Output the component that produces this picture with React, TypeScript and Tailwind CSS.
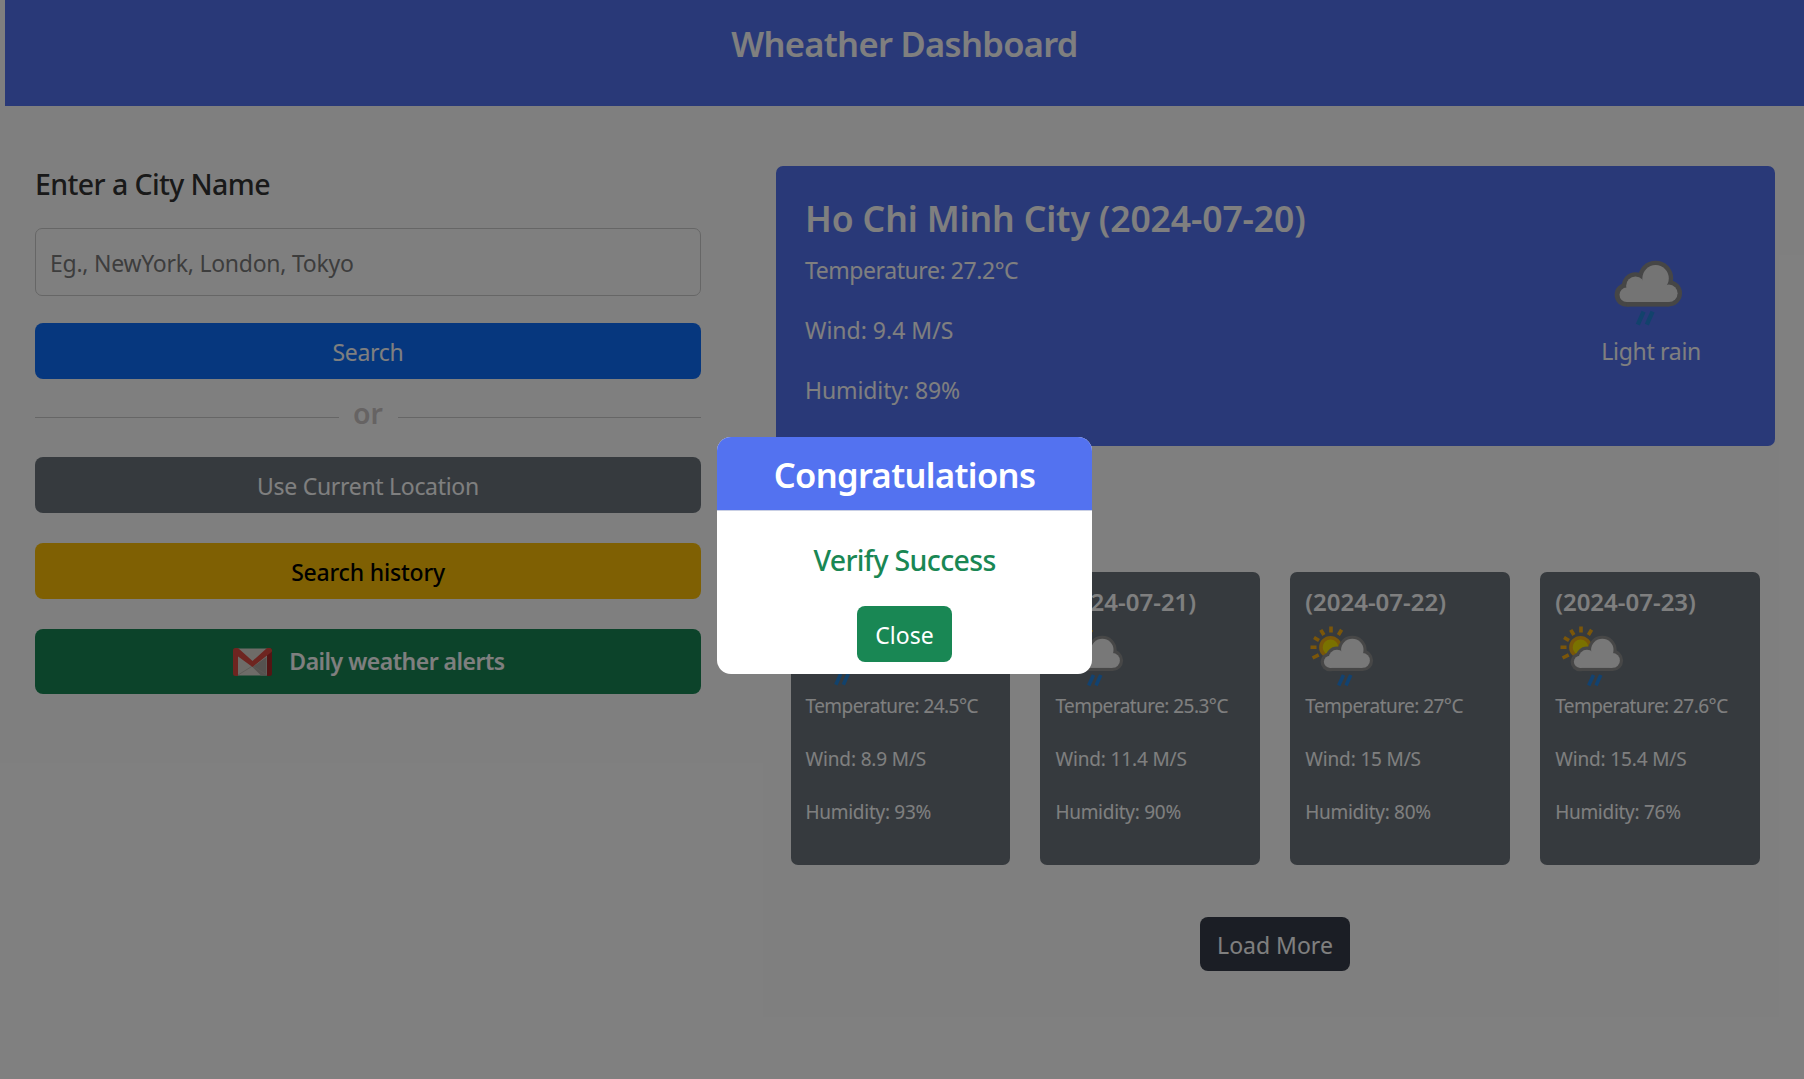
type Forecast = { date: string; temp: string; wind: string; humidity: string; sunny: boolean };

const forecasts: Forecast[] = [
  { date: "2024-07-20", temp: "24.5", wind: "8.9", humidity: "93", sunny: false },
  { date: "2024-07-21", temp: "25.3", wind: "11.4", humidity: "90", sunny: true },
  { date: "2024-07-22", temp: "27", wind: "15", humidity: "80", sunny: true },
  { date: "2024-07-23", temp: "27.6", wind: "15.4", humidity: "76", sunny: true },
];

function RainCloud({ className }: { className: string }) {
  return (
    <svg viewBox="0 0 96 96" className={className} aria-hidden="true">
      <g fill="#8c8c8c">
        <circle cx="53.6" cy="42.3" r="17.6" />
        <circle cx="33.5" cy="50" r="13.7" />
        <circle cx="24.4" cy="58.8" r="11.8" />
        <circle cx="66.9" cy="57.3" r="13.1" />
        <rect x="24.4" y="52" width="42.3" height="18.6" />
      </g>
      <g fill="#e8e8e8">
        <circle cx="53.6" cy="42.3" r="13.2" />
        <circle cx="33.5" cy="50" r="9.4" />
        <circle cx="24.7" cy="58.8" r="7.2" />
        <circle cx="66.9" cy="57.3" r="8.7" />
        <rect x="24.7" y="52" width="42" height="14" />
        <rect x="36" y="46.5" width="16" height="8" />
      </g>
      <path d="M41.6 75.7 35.8 88.6M50.6 75.7 44.8 88.6" stroke="#2484d8" strokeWidth="4.4" />
    </svg>
  );
}

function SunRainCloud({ className }: { className: string }) {
  return (
    <svg viewBox="0 0 80 80" className={className} aria-hidden="true">
      <path
        d="M26 15.5V21.5M15.8 18.8 18.9 24M9 26.5 14 29.5M5.5 36.3H11.5M7.6 47 13.7 43.9M36.6 18.8 33.4 24"
        stroke="#f7ac13"
        strokeWidth="3.6"
      />
      <circle cx="25.5" cy="36.3" r="9.6" fill="#f5e400" stroke="#f0ac14" strokeWidth="3.6" />
      <g fill="#8f8f8f">
        <circle cx="47.3" cy="39" r="14.3" />
        <circle cx="31.9" cy="47" r="11.4" />
        <circle cx="25" cy="50.8" r="9.4" />
        <circle cx="57.5" cy="49.4" r="10.6" />
        <rect x="25" y="45" width="32.5" height="15" />
      </g>
      <g fill="#f0f0f0">
        <circle cx="47.3" cy="39" r="11.2" />
        <circle cx="31.9" cy="47" r="8.2" />
        <circle cx="25" cy="50.8" r="6.1" />
        <circle cx="57.5" cy="49.4" r="7.4" />
        <rect x="25" y="45" width="32.5" height="11.9" />
      </g>
      <path d="M38.5 64 33.7 74.4M45.8 64 41 74.4" stroke="#2484e0" strokeWidth="3.6" />
    </svg>
  );
}

function GmailIcon() {
  return (
    <svg viewBox="0 0 39 28" className="h-[28px] w-[39px]" aria-hidden="true">
      <path d="M3 0.5H36V27.5H3Z" fill="#dcd8d0" />
      <path d="M19.5 19 33.5 9V27.5H28Z" fill="#aaa49e" />
      <path d="M5 27 19.5 18 34 27" fill="none" stroke="#b8b2aa" strokeWidth="0.8" />
      <path d="M0 2.5A2.5 2.5 0 0 1 2.5 0H5V28H2.5A2.5 2.5 0 0 1 0 25.5Z" fill="#dc4a40" />
      <path d="M39 2.5A2.5 2.5 0 0 0 36.5 0H34V28H36.5A2.5 2.5 0 0 0 39 25.5Z" fill="#a82a28" />
      <path d="M2.5 0H5L19.5 13 34 0H36.5A2.5 2.5 0 0 1 38.5 4L19.5 19 1 5.5V2Z" fill="#dc4a40" />
    </svg>
  );
}

function ForecastCard({ data }: { data: Forecast }) {
  return (
    <article className="h-[293px] rounded-[7px] bg-[#6c757d] pt-[15px] pl-[15px] text-[19px] leading-[30px] text-white">
      <h3 className="-mb-[6px] text-[24px] font-semibold">({data.date})</h3>
      {data.sunny ? <SunRainCloud className="size-20" /> : <RainCloud className="size-20" />}
      <p className="mb-[23px] tracking-[-0.55px]">Temperature: {data.temp}°C</p>
      <p className="mb-[23px] tracking-[-0.15px]">Wind: {data.wind} M/S</p>
      <p className="tracking-[-0.28px]">Humidity: {data.humidity}%</p>
    </article>
  );
}

export default function App() {
  return (
    <div className="relative h-[1079px] w-[1804px] overflow-hidden bg-white font-['Noto_Sans',sans-serif] text-[23px] leading-[36px]">
      <header className="ml-[5px] h-[106px] bg-[#5372f0] pt-[22px] text-center">
        <h1 className="text-[34.5px] leading-[44px] font-semibold tracking-[-0.68px] text-white">Wheather Dashboard</h1>
      </header>

      <main className="flex justify-between pt-[60px] pr-[29px] pl-[35px]">
        <section className="w-[666px]">
          <h2 className="text-[28.5px] font-medium tracking-[-0.6px] text-[#333]">Enter a City Name</h2>
          <input
            placeholder="Eg., NewYork, London, Tokyo"
            className="mt-[26px] block h-[68px] w-full rounded-[7px] border border-[#ccc] pt-px pl-[14px] tracking-[-0.26px] outline-none placeholder:text-[#7b7b7b]"
          />
          <button className="mt-[27px] block h-[56px] w-full rounded-[8px] bg-[#0d6efd] pt-[2px] tracking-[-0.3px] text-white">Search</button>
          <div className="mt-4 flex h-9 items-center text-[#ccc6c6]">
            <span className="mt-2 h-px flex-1 bg-[#ccc]" />
            <span className="w-[59px] text-center text-[28.5px] font-semibold">or</span>
            <span className="mt-2 h-px flex-1 bg-[#ccc]" />
          </div>
          <button className="mt-[26px] block h-[56px] w-full rounded-[8px] bg-[#6c757d] pt-[2px] tracking-[-0.3px] text-white">
            Use Current Location
          </button>
          <button className="mt-[30px] block h-[56px] w-full rounded-[8px] bg-[#ffc107] pt-[2px] font-medium tracking-[-0.2px] text-black">
            Search history
          </button>
          <button className="mt-[30px] flex h-[65px] w-full items-center justify-center gap-[17px] rounded-[8px] bg-[#198754] pl-[2px] font-semibold tracking-[-0.5px] text-white">
            <GmailIcon />
            <span className="pb-[2px]">Daily weather alerts</span>
          </button>
        </section>

        <section className="w-[999px]">
          <div className="flex h-[280px] justify-between rounded-[7px] bg-[#5372f0] pt-[30px] pr-[74px] pl-[29px] text-white">
            <div>
              <h2 className="mb-3 text-[35.5px] leading-[44px] font-semibold tracking-[-0.12px]">Ho Chi Minh City (2024-07-20)</h2>
              <p className="mb-6 tracking-[-0.43px]">Temperature: 27.2°C</p>
              <p className="mb-6">Wind: 9.4 M/S</p>
              <p className="tracking-[-0.1px]">Humidity: 89%</p>
            </div>
            <div className="mt-10 flex flex-col items-center">
              <RainCloud className="mr-[2px] size-24" />
              <p className="mt-px tracking-[-0.3px]">Light rain</p>
            </div>
          </div>

          <div className="mt-[126px] grid grid-cols-4 gap-[30px] pr-[15px] pl-[14.5px]">
            {forecasts.map((f) => (
              <ForecastCard key={f.date} data={f} />
            ))}
          </div>

          <button className="mt-[52px] ml-[424px] block h-[54px] w-[150px] rounded-[8px] bg-[#363c4a] pt-[2px] text-white">Load More</button>
        </section>
      </main>

      <div className="absolute inset-0 flex items-start justify-center bg-black/50 pt-[437px]">
        <div role="dialog" className="ml-[5px] h-[237px] w-[375px] overflow-hidden rounded-[14px] bg-white text-center">
          <div className="h-[74px] border-b border-[#c9cfe4] bg-[#5372f0] pt-[16px]">
            <h2 className="text-[34.5px] leading-[44px] font-semibold tracking-[-0.65px] text-white">Congratulations</h2>
          </div>
          <p className="mt-[31px] text-[28.5px] font-medium tracking-[-0.65px] text-[#198754]">Verify Success</p>
          <button className="mt-[28px] h-[56px] w-[95px] rounded-[8px] bg-[#198754] pt-[2px] text-white">Close</button>
        </div>
      </div>
    </div>
  );
}
